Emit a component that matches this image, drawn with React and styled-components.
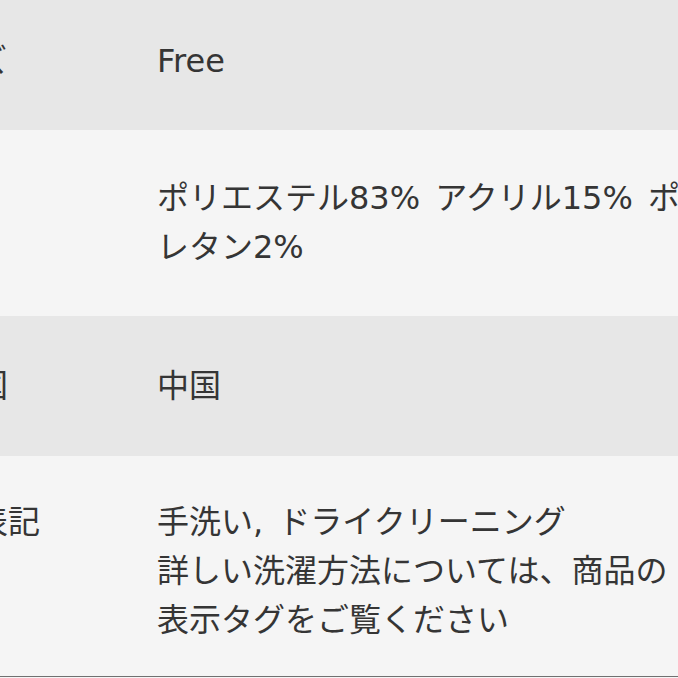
import React from "react";
import styled, { createGlobalStyle } from "styled-components";

const Global = createGlobalStyle`
  html, body {
    margin: 0;
    padding: 0;
    background: #f5f5f5;
    overflow: hidden;
  }
  body {
    font-family: "DejaVu Sans", "Noto Sans CJK JP", sans-serif;
    color: #353535;
    -webkit-font-smoothing: antialiased;
  }
`;

const Table = styled.div`
  margin: -7px 0 0 -88px;
  width: 900px;
  display: flex;
  flex-direction: column;
  border-bottom: 1px solid #707070;
`;

const Row = styled.div`
  display: grid;
  grid-template-columns: 245px 1fr;
  padding: ${(p) => p.$pad};
  background: ${(p) => (p.$shade ? "#e7e7e7" : "#f5f5f5")};
  font-size: 32px;
  line-height: 49px;
`;

const Label = styled.div`
  white-space: nowrap;
`;

const Value = styled.div`
  display: flex;
  flex-direction: column;
  white-space: nowrap;
  word-spacing: 5px;
`;

const rows = [
  { label: "サイズ", lines: ["Free"], shade: true, pad: "44px 0" },
  {
    label: "素材",
    lines: ["ポリエステル83% アクリル15% ポリウ", "レタン2%"],
    shade: false,
    pad: "44px 0",
  },
  { label: "原産国", lines: ["中国"], shade: true, pad: "46px 0 45px" },
  {
    label: "洗濯表記",
    lines: [
      "手洗い, ドライクリーニング",
      "詳しい洗濯方法については、商品の",
      "表示タグをご覧ください",
    ],
    shade: false,
    pad: "42px 0 31px",
  },
];

export default function App() {
  return (
    <>
      <Global />
      <Table>
        {rows.map((r) => (
          <Row key={r.label} $shade={r.shade} $pad={r.pad}>
            <Label>{r.label}</Label>
            <Value>
              {r.lines.map((l) => (
                <span key={l}>{l}</span>
              ))}
            </Value>
          </Row>
        ))}
      </Table>
    </>
  );
}
